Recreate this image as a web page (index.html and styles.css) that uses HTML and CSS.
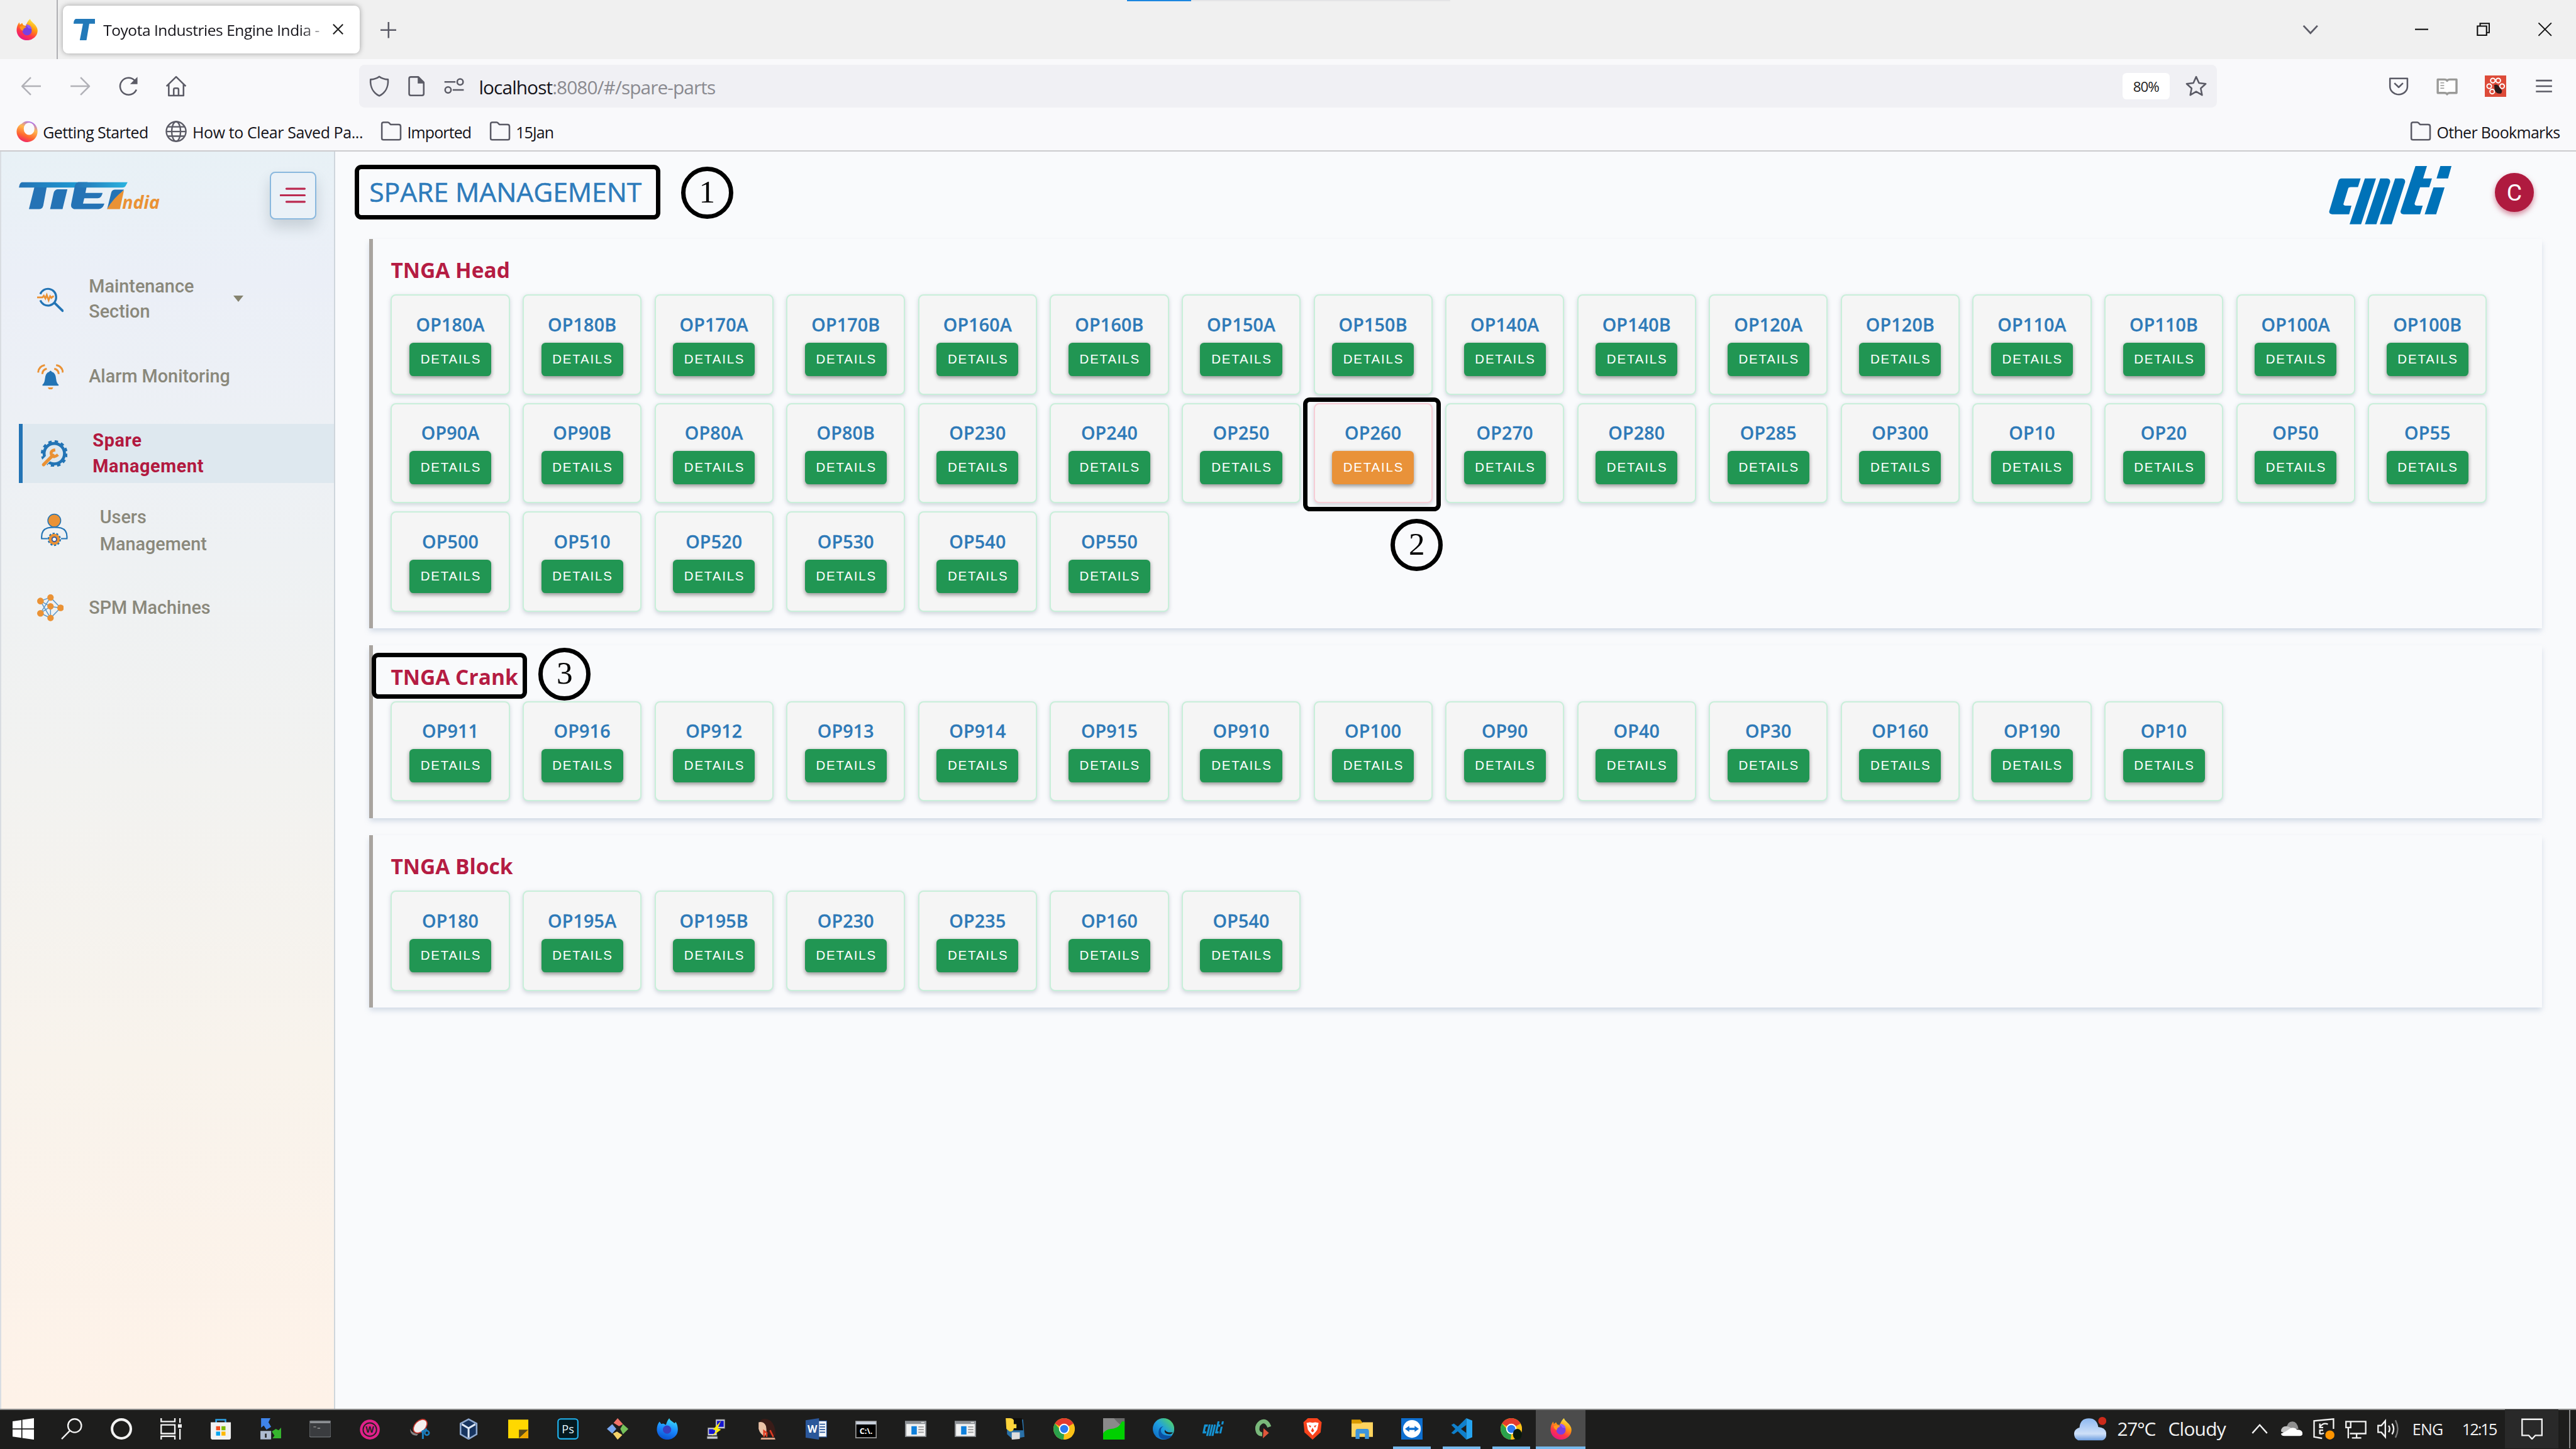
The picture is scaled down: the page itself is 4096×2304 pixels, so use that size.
FILE: index.html
```html
<!DOCTYPE html>
<html lang="en">
<head>
<meta charset="utf-8">
<title>Toyota Industries Engine India</title>
<link rel="stylesheet" href="styles.css">
</head>
<body>
<svg class="defs" aria-hidden="true">
  <linearGradient id="flame" x1="0.8" y1="0" x2="0.3" y2="1"><stop offset="0" stop-color="#fff44f"/><stop offset=".4" stop-color="#ff980e"/><stop offset=".7" stop-color="#ff3647"/><stop offset="1" stop-color="#e31587"/></linearGradient>
  <linearGradient id="aqua" x1="0.7" y1="0" x2="0.4" y2="1"><stop offset="0" stop-color="#3fe1f5"/><stop offset=".5" stop-color="#1a8cff"/><stop offset="1" stop-color="#0a4fd0"/></linearGradient>
  <linearGradient id="ring" x1="0.7" y1="0" x2="0.3" y2="1"><stop offset="0" stop-color="#a56bff"/><stop offset=".35" stop-color="#ffb84f"/><stop offset=".7" stop-color="#ff6a2f"/><stop offset="1" stop-color="#f0206a"/></linearGradient>
  <linearGradient id="bar" x1="0" x2="1"><stop offset="0" stop-color="#2573b5"/><stop offset="1" stop-color="#1c9fd6"/></linearGradient>
  <linearGradient id="bar2" x1="0" x2="1"><stop offset="0" stop-color="#2573b5"/><stop offset="1" stop-color="#2ab3df"/></linearGradient>
  <linearGradient id="cloud" x1="0" y1="0" x2="0" y2="1"><stop offset="0" stop-color="#8db8f0"/><stop offset=".7" stop-color="#cfe0f8"/><stop offset="1" stop-color="#6f9fe0"/></linearGradient>
  <linearGradient id="edge" x1="0" y1="1" x2="1" y2="0"><stop offset="0" stop-color="#0b64c0"/><stop offset=".5" stop-color="#1f9fe0"/><stop offset="1" stop-color="#5fe04a"/></linearGradient>
  <symbol id="firefox" viewBox="0 0 16 16"><path fill="url(#flame)" d="M10.3 0c.3 1.6 2 2.6 3 3.8 1.700 1.800 2.700 3.500 2.500 5.400A7.900 7 0 0 1 8 16 7.700 7.500 0 0 1 .2 8.600C.2 6 1 4 2.200 2.600l.5 1.700 1.600-1.200.9 1.600 1.800.4C8 2.800 8.800 1.200 10.300 0z"/><circle cx="8" cy="8.800" r="3.500" fill="#7a3fe0"/><path fill="#ff9a1e" d="M2.500 6c1.500-1 3-1 5 .4-1.500.2-2.500.9-2.600 2.500C3.500 8.500 2.800 7.500 2.500 6z"/><path fill="#9059ff" d="M7 4.300c2-.3 4 .8 4.500 3.200L9 7z"/></symbol>
  <symbol id="folder" viewBox="0 0 16 16"><path fill="none" stroke="#5b5b66" stroke-width="1.200" stroke-linejoin="round" d="M1 13V2.500q0-1.300 1.300-1.300h3.200q.6 0 1 .5l1 1.100h6q1.500 0 1.500 1.400V13q0 1.200-1.200 1.200H2.200Q1 14.200 1 13z"/></symbol>
  <symbol id="chrome" viewBox="0 0 16 16"><circle cx="8" cy="8" r="8" fill="#fbc116"/><path fill="#e33b2e" d="M8 8 1.100 4A8 8 0 0 1 14.900 4z"/><path fill="#2ba24c" d="M1.100 4 8 12 7.500 16A8 8 0 0 1 1.100 4z"/><circle cx="8" cy="8" r="3.900" fill="#fff"/><circle cx="8" cy="8" r="3" fill="#2a7af0"/></symbol>
  <symbol id="appwin" viewBox="0 0 16 16"><path fill="#8c9094" d="M0 2h16v12H0z"/><path fill="#f2f2f2" d="M1 4.300h14v9H1z"/><path fill="#0f80dc" d="M4.800 6h4v6.200h-4z"/><path stroke="#999" stroke-width=".8" d="M10 6.500h4M10 8.500h4M10 10.500h4"/><path stroke="#ddd" stroke-width=".7" d="M12 3.200h2.500"/></symbol>
  <symbol id="cmti" viewBox="923 948 321 333" preserveAspectRatio="none"><path d="M956 1019H1006L999 1068H980Q975 1069 974 1073L961 1165Q961 1173 967 1174H982L976 1223H932Q923 1222 924 1206L948 1032Q950 1020 956 1019ZM1017 1019H1046L1007 1281H977ZM1057 1019H1075Q1084 1022 1083 1040L1047 1281H1017ZM1096 1019H1114Q1123 1022 1122 1040L1087 1281H1056ZM1149 948H1179L1169 1019H1192L1185 1069H1161L1147 1160Q1146 1173 1153 1174H1168L1161 1223H1118Q1110 1222 1110 1206ZM1214 948H1243L1234 1019H1204ZM1196 1070H1225L1203 1223H1173Z"/></symbol>
</svg>

<header class="browser">
  <div class="tabs">
    <div class="pinned"><svg class="i16"><use href="#firefox"/></svg></div>
    <div class="tab">
      <svg class="i16" viewBox="0 0 16 16"><path fill="#2279b9" d="M1.500 0H16v3.600h-4.300L9.600 16H4.600L7 3.600H0Q0 1 1.500 0z"/></svg>
      <span class="tab-title">Toyota Industries Engine India -</span>
      <svg class="close" viewBox="0 0 8 8"><path d="M.4.4l7.200 7.200M7.600.4.4 7.600"/></svg>
    </div>
    <svg class="plus" viewBox="0 0 12 12"><path d="M6 0v12M0 6h12"/></svg>
    <div class="win">
      <svg class="chev" viewBox="0 0 12 12"><path d="M.8 3.200 6 8.800l5.200-5.600"/></svg>
      <span><svg viewBox="0 0 10 10"><path d="M0 5h10"/></svg></span>
      <span><svg viewBox="0 0 10 10"><path d="M.6 2.600h6.800v6.800H.6zM2.600 2.600V.6h6.800v6.800H7.400"/></svg></span>
      <span><svg viewBox="0 0 10 10"><path stroke-width=".9" d="M.2.200l9.600 9.600M9.800.2.200 9.800"/></svg></span>
    </div>
  </div>
  <div class="nav">
    <span class="nb dim"><svg viewBox="0 0 16 16"><path d="M15 8H1.200M7.500 1.500 1 8l6.500 6.500"/></svg></span>
    <span class="nb dim"><svg viewBox="0 0 16 16"><path d="M1 8h13.800M8.500 1.500 15 8l-6.500 6.500"/></svg></span>
    <span class="nb"><svg viewBox="0 0 16 16"><path d="M14 10.500A6.300 6.300 0 1 1 12.800 3.800"/><path class="fill" d="M14.800 1v5.500H9.300z"/></svg></span>
    <span class="nb"><svg viewBox="0 0 16 16"><path d="M.8 8 8 1l7.200 7M2.500 6.600V15h11V6.600M6.200 15v-4.500a1 1 0 0 1 1-1h1.600a1 1 0 0 1 1 1V15"/></svg></span>
    <div class="url">
      <span class="ub"><svg viewBox="0 0 16 16"><path d="M8 .8C9.500 2 12 2.800 14.500 3c.4 5.500-2 10-6.500 12.200C3.500 13 1.100 8.500 1.500 3 4 2.800 6.500 2 8 .8z"/></svg></span>
      <span class="ub"><svg viewBox="0 0 16 16"><path d="M2.600 13.600V2.400q0-1.300 1.300-1.300H9.500l4 4v8.500q0 1.300-1.300 1.300H3.900q-1.300 0-1.300-1.300z"/><path class="fill" d="M9 1v5h4.800z"/></svg></span>
      <span class="ub"><svg viewBox="0 0 16 16"><path d="M.8 4.800H9M15.200 10.800H7"/><circle cx="12.500" cy="4.800" r="2.200"/><circle cx="3.500" cy="10.800" r="2.200"/></svg></span>
      <span class="addr"><b>localhost</b>:8080/#/spare-parts</span>
      <span class="zoom">80%</span>
      <span class="ub"><svg viewBox="0 0 16 16"><path d="M8 1l2.100 4.600 5 .6-3.700 3.400 1 5L8 12l-4.400 2.600 1-5L.9 6.200l5-.6z"/></svg></span>
    </div>
    <div class="tools">
      <span class="nb"><svg viewBox="0 0 16 16"><path d="M1.500 2.200h13v6a6.500 6 0 0 1-13 0zM4.800 5.700 8 8.800l3.200-3.100"/></svg></span>
      <span class="nb reader"><svg viewBox="0 0 16 16"><path fill="#fff" d="M1 3h5q1.500 0 2 1 .5-1 2-1h5v10h-5q-1.500 0-2 1-.5-1-2-1H1z"/><path stroke-width=".8" d="M3 5.500h2.800M3 7.500h2.800M3 9.500h2.800"/></svg></span>
      <span class="nb"><svg viewBox="0 0 16 16"><path fill="#dd4b39" stroke="none" d="M0 0h16v16H0z"/><g fill="none" stroke="#fff" stroke-width=".9"><circle cx="6" cy="3.800" r="1.700"/><circle cx="10" cy="3.800" r="1.700"/><circle cx="3.300" cy="8" r="1.700"/><circle cx="12.900" cy="8" r="1.700"/><circle cx="5.500" cy="12" r="1.700"/></g><path fill="#2a1a1a" stroke="none" d="M7 7q2.500-.8 3.500 1.200l2.300 3q0 2.600-1.800 2.300-2.500 0-3.600-2.500z"/></svg></span>
      <span class="nb"><svg viewBox="0 0 16 16"><path d="M2 3.800h12M2 8h12M2 12h12"/></svg></span>
    </div>
  </div>
  <div class="bookmarks">
    <svg class="i16" viewBox="0 0 16 16"><path fill="url(#ring)" d="M8 .3c5 0 7.800 3.500 7.800 7.700A7.800 7.800 0 0 1 .2 8.200C.2 5 2 3 4 2.200 5.300 1 6.500.3 8 .3z"/><ellipse cx="9.500" cy="6" rx="4" ry="4.600" fill="#fafafc"/></svg><span class="bk-start">Getting Started</span>
    <svg class="i16 line" viewBox="0 0 16 16"><circle cx="8" cy="8" r="7.300"/><ellipse cx="8" cy="8" rx="3.300" ry="7.300"/><path d="M.7 8h14.600M1.800 4.500h12.400M1.800 11.500h12.400"/></svg><span class="bk-clear">How to Clear Saved Pa...</span>
    <svg class="i16"><use href="#folder"/></svg><span class="bk-imp">Imported</span>
    <svg class="i16"><use href="#folder"/></svg><span class="bk-jan">15Jan</span>
    <svg class="i16 push"><use href="#folder"/></svg><span class="bk-other">Other Bookmarks</span>
  </div>
</header>
<div class="loader"></div>

<div class="app">
  <aside class="side">
    <div class="brand">
      <svg class="tiei" viewBox="40 72 990 196"><path fill="url(#bar)" d="M60 75H520L505 113H40L45 92Q50 77 60 75Z"/><path fill="#2573b5" d="M148 112H234L210 240Q204 263 180 263H110ZM310 125H379L345 263H258L283 150Q290 127 310 125ZM455 75H520L505 150H625Q618 187 590 187H497L488 225H638Q625 263 598 263H425Q402 255 405 230L430 105Q436 78 455 75ZM710 127H775L657 263L685 150Q690 128 710 127Z"/><path fill="url(#bar2)" d="M455 75H800L785 103Q778 113 765 113H430Q436 78 455 75Z"/><path fill="#ea9235" d="M775 130L746 263H656Q700 185 775 130Z"/><text x="762" y="263" textLength="262" lengthAdjust="spacingAndGlyphs">ndia</text></svg>
      <button class="menu-btn"><svg viewBox="0 0 20 12"><path d="M5 1h14M0.500 6H19M5 11h14"/></svg></button>
    </div>
    <nav class="menu">
      <a class="item"><svg class="i20" viewBox="0 0 20 20"><path fill="none" stroke="#2374b5" stroke-width="1.500" d="M2.400 6.400A6.100 6.100 0 0 1 14.200 8.500 6.100 6.100 0 0 1 2.400 11"/><path stroke="#2374b5" stroke-width="1.800" stroke-linecap="round" d="M13 13l6 5.800"/><path fill="none" stroke="#ea9235" stroke-width="1.300" d="M0 8.800h4l1-1.200 1.200 2 1-2.600 1.400 4L9.700 8l1 1.200 1-1h.8"/></svg><span>Maintenance<br>Section</span><i class="caret"></i></a>
      <a class="item"><svg class="i20" viewBox="0 0 20 20"><path fill="#2374b5" d="M4 16.200q1.500-1 1.800-4Q6.100 7.500 9 6.700 10 5 11 6.700q2.900.8 3.200 5.500.3 3 1.800 4v.8H4z"/><path fill="#ea9235" d="M8 18.300h4q-.5 1.700-2 1.700t-2-1.700z"/><path fill="none" stroke="#ea9235" stroke-width="1.400" d="M.8 7.200Q1 2.500 5.800 1.600M3.900 8.300Q4 5 7.200 4.300M19.200 7.200Q19 2.500 14.200 1.600M16.100 8.300Q16 5 12.800 4.300"/></svg><span>Alarm Monitoring</span></a>
      <a class="item active"><svg class="i20" viewBox="0 0 20 20"><circle cx="10" cy="10" r="9" fill="none" stroke="#2374b5" stroke-width="2" stroke-dasharray="2.500 2.212"/><circle cx="10" cy="10" r="7.600" fill="none" stroke="#2374b5" stroke-width="2.200" /><path stroke="#dee8ef" stroke-width="5" d="M1 18l8-8"/><path stroke="#ea9235" stroke-width="2.400" stroke-linecap="round" d="M2 18.200l7-7"/><path fill="none" stroke="#ea9235" stroke-width="2.200" d="M10.700 7.200Q6.500 7.800 8 11.200 9.500 13.500 12.800 10.800"/></svg><span>Spare<br>Management</span></a>
      <a class="item users"><svg class="i-user" viewBox="0 0 20 26"><circle cx="10" cy="5.500" r="4.800" fill="#ea9235" stroke="#2374b5" stroke-width=".7"/><path fill="none" stroke="#2374b5" stroke-width="1" d="M5 19H.6Q0 12.500 5 11q5-1 10 0 5 1.500 4.400 8H15"/><circle cx="10" cy="19.500" r="4.300" fill="#ea9235" stroke="#2374b5" stroke-width="1.400" stroke-dasharray="1.500 1.200"/><circle cx="10" cy="19.500" r="4" fill="#ea9235"/><circle cx="10" cy="19.500" r="1.700" fill="#fff" stroke="#3a5c9e" stroke-width=".9"/></svg><span>Users<br>Management</span></a>
      <a class="item"><svg class="i20" viewBox="0 0 20 20"><path fill="none" stroke="#5b97c9" stroke-width=".7" d="M2.500 5 10 2.300l7.500 7.800-7.500 7.600L2.500 14 10 2.300M2.500 5 10 17.700M2.500 5 10 9.100 2.500 14M10 9.100l7.500 1M10 9.100v8.600"/><g fill="#ea9235"><circle cx="2.500" cy="5" r="2.500"/><circle cx="10" cy="2.400" r="2.400"/><circle cx="10" cy="9" r="2.400"/><circle cx="17.500" cy="10.100" r="2.500"/><circle cx="2.500" cy="14.200" r="2.500"/><circle cx="10" cy="17.600" r="2.400"/></g></svg><span>SPM Machines</span></a>
    </nav>
  </aside>

  <main class="page">
    <div class="top">
      <h1>SPARE MANAGEMENT</h1>
      <svg class="cmti"><use href="#cmti"/></svg>
      <div class="avatar">C</div>
    </div>
    <section class="panel">
      <h2>TNGA Head</h2>
      <div class="grid">
        <div class="card"><h3>OP180A</h3><button>DETAILS</button></div>
        <div class="card"><h3>OP180B</h3><button>DETAILS</button></div>
        <div class="card"><h3>OP170A</h3><button>DETAILS</button></div>
        <div class="card"><h3>OP170B</h3><button>DETAILS</button></div>
        <div class="card"><h3>OP160A</h3><button>DETAILS</button></div>
        <div class="card"><h3>OP160B</h3><button>DETAILS</button></div>
        <div class="card"><h3>OP150A</h3><button>DETAILS</button></div>
        <div class="card"><h3>OP150B</h3><button>DETAILS</button></div>
        <div class="card"><h3>OP140A</h3><button>DETAILS</button></div>
        <div class="card"><h3>OP140B</h3><button>DETAILS</button></div>
        <div class="card"><h3>OP120A</h3><button>DETAILS</button></div>
        <div class="card"><h3>OP120B</h3><button>DETAILS</button></div>
        <div class="card"><h3>OP110A</h3><button>DETAILS</button></div>
        <div class="card"><h3>OP110B</h3><button>DETAILS</button></div>
        <div class="card"><h3>OP100A</h3><button>DETAILS</button></div>
        <div class="card"><h3>OP100B</h3><button>DETAILS</button></div>
        <div class="card"><h3>OP90A</h3><button>DETAILS</button></div>
        <div class="card"><h3>OP90B</h3><button>DETAILS</button></div>
        <div class="card"><h3>OP80A</h3><button>DETAILS</button></div>
        <div class="card"><h3>OP80B</h3><button>DETAILS</button></div>
        <div class="card"><h3>OP230</h3><button>DETAILS</button></div>
        <div class="card"><h3>OP240</h3><button>DETAILS</button></div>
        <div class="card"><h3>OP250</h3><button>DETAILS</button></div>
        <div class="card warn"><h3>OP260</h3><button>DETAILS</button></div>
        <div class="card"><h3>OP270</h3><button>DETAILS</button></div>
        <div class="card"><h3>OP280</h3><button>DETAILS</button></div>
        <div class="card"><h3>OP285</h3><button>DETAILS</button></div>
        <div class="card"><h3>OP300</h3><button>DETAILS</button></div>
        <div class="card"><h3>OP10</h3><button>DETAILS</button></div>
        <div class="card"><h3>OP20</h3><button>DETAILS</button></div>
        <div class="card"><h3>OP50</h3><button>DETAILS</button></div>
        <div class="card"><h3>OP55</h3><button>DETAILS</button></div>
        <div class="card"><h3>OP500</h3><button>DETAILS</button></div>
        <div class="card"><h3>OP510</h3><button>DETAILS</button></div>
        <div class="card"><h3>OP520</h3><button>DETAILS</button></div>
        <div class="card"><h3>OP530</h3><button>DETAILS</button></div>
        <div class="card"><h3>OP540</h3><button>DETAILS</button></div>
        <div class="card"><h3>OP550</h3><button>DETAILS</button></div>
      </div>
    </section>
    <section class="panel">
      <h2>TNGA Crank</h2>
      <div class="grid">
        <div class="card"><h3>OP911</h3><button>DETAILS</button></div>
        <div class="card"><h3>OP916</h3><button>DETAILS</button></div>
        <div class="card"><h3>OP912</h3><button>DETAILS</button></div>
        <div class="card"><h3>OP913</h3><button>DETAILS</button></div>
        <div class="card"><h3>OP914</h3><button>DETAILS</button></div>
        <div class="card"><h3>OP915</h3><button>DETAILS</button></div>
        <div class="card"><h3>OP910</h3><button>DETAILS</button></div>
        <div class="card"><h3>OP100</h3><button>DETAILS</button></div>
        <div class="card"><h3>OP90</h3><button>DETAILS</button></div>
        <div class="card"><h3>OP40</h3><button>DETAILS</button></div>
        <div class="card"><h3>OP30</h3><button>DETAILS</button></div>
        <div class="card"><h3>OP160</h3><button>DETAILS</button></div>
        <div class="card"><h3>OP190</h3><button>DETAILS</button></div>
        <div class="card"><h3>OP10</h3><button>DETAILS</button></div>
      </div>
    </section>
    <section class="panel">
      <h2>TNGA Block</h2>
      <div class="grid">
        <div class="card"><h3>OP180</h3><button>DETAILS</button></div>
        <div class="card"><h3>OP195A</h3><button>DETAILS</button></div>
        <div class="card"><h3>OP195B</h3><button>DETAILS</button></div>
        <div class="card"><h3>OP230</h3><button>DETAILS</button></div>
        <div class="card"><h3>OP235</h3><button>DETAILS</button></div>
        <div class="card"><h3>OP160</h3><button>DETAILS</button></div>
        <div class="card"><h3>OP540</h3><button>DETAILS</button></div>
      </div>
    </section>
  </main>
</div>

<footer class="taskbar">
  <span class="t first"><svg viewBox="0 0 16 16" fill="#fff"><path d="M0 2.300 6.500 1.400v6.200H0zM7.300 1.200 16 0v7.600H7.300zM0 8.400h6.500v6.200L0 13.700zM7.300 8.400H16V16l-8.700-1.200z"/></svg></span>
  <span class="t"><svg class="w" viewBox="0 0 16 16"><circle cx="10.200" cy="5.600" r="5"/><path d="M6.600 9.300.5 15.500"/></svg></span>
  <span class="t"><svg class="w" viewBox="0 0 16 16"><circle cx="8" cy="8" r="7" stroke-width="1.900"/></svg></span>
  <span class="t"><svg class="w" viewBox="0 0 16 16"><path d="M.6 0v2.500h10.200V0M.6 5h10.200v6.500H.6zM.6 16v-2.500h10.200V16M14.600 0v3.500M14.600 8v8"/><path stroke-width="3" d="M14.600 4.500v2.600"/></svg></span>
  <span class="t"><svg viewBox="0 0 16 16"><path fill="none" stroke="#2ea3e6" stroke-width="1.200" d="M4.500 4V1.200h7V4"/><path fill="#f2f2f2" d="M.5 3h15v11.500Q15.500 16 14 16H2Q.5 16 .5 14.500z"/><path fill="#f25022" d="M4.500 6h3v3h-3z"/><path fill="#7fba00" d="M8.500 6h3v3h-3z"/><path fill="#00a4ef" d="M4.500 10h3v3h-3z"/><path fill="#ffb900" d="M8.500 10h3v3h-3z"/></svg></span>
  <span class="t"><svg viewBox="0 0 16 16"><path fill="#3f84ea" d="M1 0h7L6.500 3 8.500 6.500 5 8.500 3 5.500 1 7z"/><path fill="#36b52e" d="M16 7v8H9.500l1.500-2-2-3 3-2 2 1z"/><path fill="#aebbd0" d="M.5 9.500h8v6.300h-8z"/><path stroke="#222" stroke-width="1.200" d="M4.500 11.500v3"/></svg></span>
  <span class="t"><svg viewBox="0 0 16 16"><rect y="2" width="16" height="12" rx="1" fill="#3a3c3f" stroke="#707478" stroke-width=".6"/><path fill="#8c8f93" d="M.5 2.300h15v1.500H.5z"/><path stroke="#999" stroke-width=".6" d="M3 6.500h2M6 7.500h2"/></svg></span>
  <span class="t"><svg viewBox="0 0 16 16"><circle cx="8" cy="8.500" r="7.400" fill="#e0218a"/><circle cx="8" cy="8.500" r="5" fill="none" stroke="#222" stroke-width=".9"/><text x="8" y="11" fill="#222" font-size="6.500" font-weight="700" text-anchor="middle">W</text></svg></span>
  <span class="t"><svg viewBox="0 0 16 16"><ellipse cx="8.500" cy="6" rx="4" ry="6" transform="rotate(45 8.500 6)" fill="#f4f0f0" stroke="#c8382f" stroke-width=".8"/><path fill="#8a8484" d="M1 8q1 3 6 4l-1 1Q1 13 1 8z"/><path fill="none" stroke="#1b7fc0" stroke-width="1.400" d="M9.500 10.500l4-2.500M10.500 9v6.500"/><circle cx="13.500" cy="11" r="1.600" fill="none" stroke="#1b7fc0" stroke-width="1.200"/></svg></span>
  <span class="t"><svg viewBox="0 0 16 16"><path fill="#17345f" stroke="#8fa9d0" stroke-width="1.200" d="M8 .8 14 4v8l-6 3.500L2 12V4z"/><path fill="none" stroke="#dfe8f5" stroke-width="1.400" d="M3 4.500 8 7.500l5-3M8 7.500v7"/></svg></span>
  <span class="t"><svg viewBox="0 0 16 16"><path fill="#ffd800" d="M.5 1h15v14H.5z"/><path fill="#5b4a1a" d="M8.500 8.500h7L8.500 15z"/><path fill="#f0a800" d="M15.500 8.500V15h-7z"/></svg></span>
  <span class="t"><svg viewBox="0 0 16 16"><rect x=".6" y=".6" width="14.800" height="14.800" rx="2" fill="#04191f" stroke="#20b4f0" stroke-width="1"/><text x="8" y="11.200" fill="#e6f6ff" font-size="8.500" text-anchor="middle">Ps</text></svg></span>
  <span class="t"><svg viewBox="0 0 16 16"><path fill="#f0736a" d="M8 0l4 4.500-3 1.500-4-2.500z"/><path fill="#76c05a" d="M12 4.500 16 8l-4 4-2-4z"/><path fill="#f3d26a" d="M11.500 12.500 8 16l-3.500-4.500 3-1.500z"/><path fill="#78a8f0" d="M4 4.500 0 8l4 3.500 3-3.500z"/></svg></span>
  <span class="t"><svg viewBox="0 0 16 16"><path fill="url(#aqua)" d="M9.500 0c.3 1.600 2.500 2.600 4 3.800l.8-1c1.300 1.800 1.700 4.500 1.500 6.400A7.900 7 0 0 1 8 16 7.700 7.500 0 0 1 .2 8.600C.2 6 1 4 2.200 2.600l1.300 1.700L5 4l2 1C7.500 2.800 8.500 1.200 9.500 0z"/><circle cx="7.800" cy="8.500" r="3.100" fill="#3a3fc0"/></svg></span>
  <span class="t"><svg viewBox="0 0 16 16"><path fill="#c9ccd2" stroke="#333" stroke-width=".4" d="M7 .8h7v7H7zM1 7h7v6H1zM.5 13.500h8v2h-8z"/><path fill="#1414d0" d="M8 2h5v4.500H8zM2 8.200h4.500v3.500H2z"/><path fill="#fff000" d="M11 2 5 8.500l3 .5-4 4.500L11 8.500 8.500 7.500z"/></svg></span>
  <span class="t"><svg viewBox="0 0 16 16"><path fill="#3a1c18" d="M3 2q3-3 8 0 4 4 3.500 11L8 12z"/><path fill="#ecc3a8" d="M2 3q4-1 5.500 3 1 5-1 7.500Q3 12 2 8z"/><path fill="#d8a488" d="M4 14.500h10l.5 1.500H3.500z"/><path stroke="#e03a20" stroke-width="1.200" fill="none" d="M6 14V9.500l2 1.500v3M10.500 9l2.500 5"/></svg></span>
  <span class="t"><svg viewBox="0 0 16 16"><path fill="#f5f8fc" stroke="#2b579a" stroke-width=".6" d="M9 2h6.700v12H9z"/><path stroke="#2b579a" stroke-width=".9" d="M10.500 4.500h4M10.500 6.500h4M10.500 8.500h4M10.500 10.500h4"/><path fill="#2b579a" d="M0 1.500 10 0v16L0 14.500z"/><text x="5" y="11" fill="#fff" font-size="7.500" font-weight="700" text-anchor="middle">W</text></svg></span>
  <span class="t"><svg viewBox="0 0 16 16"><path fill="#000" stroke="#9a9a9a" stroke-width=".8" d="M.4 2.400h15.200v12.200H.4z"/><path fill="#c8d0dc" d="M.6 2.500h14.800v2.200H.6z"/><text x="8" y="11.800" fill="#fff" font-size="6" font-weight="700" text-anchor="middle">C:\.</text></svg></span>
  <span class="t"><svg><use href="#appwin"/></svg></span>
  <span class="t"><svg><use href="#appwin"/></svg></span>
  <span class="t"><svg viewBox="0 0 16 16"><path fill="#2a71a8" d="M2 0l12 1 1 13-9 1.500L2 12z"/><path fill="#0d0d0d" d="M6 0h7l1 9H6z"/><path fill="#ffd43b" d="M1 0q5-.5 6 1.500v3h2v3H7Q7 10 4 10L1.500 8z"/><path fill="#ddd" d="M5.500 10.500h6v5l-6 .5z"/></svg></span>
  <span class="t"><svg><use href="#chrome"/></svg></span>
  <span class="t"><svg viewBox="0 0 16 16"><path fill="#8a8a8a" d="M0 0h16v16H0z"/><path fill="#6b6b6b" d="M8 0h8v6q-3 0-8-6z"/><path fill="#00d000" d="M0 16v-4.500q1.500-3 6-3.500 6-.5 8-5.500h2V16z"/></svg></span>
  <span class="t"><svg viewBox="0 0 16 16"><circle cx="8" cy="8" r="8" fill="url(#edge)"/><path fill="#0a4fa0" d="M6 9q0 4.500 8.500 4-3 3.500-7 2.500T4.500 9q.5-2.500 3.500-3-2 1-2 3z"/><path fill="#1c1c1c" d="M9 8.500q1 2.500 6 2-1 1.500-3 1.500-4-.5-3-3.500z"/></svg></span>
  <span class="t"><svg class="mini"><use href="#cmti"/></svg></span>
  <span class="t"><svg viewBox="0 0 16 16"><path fill="none" stroke="#79b87a" stroke-width="3" d="M12.800 6.500Q10.500.8 6.500 3 2.500 6 4.500 10.500q1 1.500 3 1.500"/><path fill="#e0553a" d="M8.500 7.500 12.500 11l-4.500 4z"/></svg></span>
  <span class="t"><svg viewBox="0 0 16 16"><path fill="#f8431c" d="M4.500 0h7l3.300 3-.8 7.500-6 5.500-6-5.500L1.200 3z"/><path fill="#fff" d="M3.500 3.500 6 3l2 .4L10 3l2.500.5-1 5L10.500 10 8 12.800 5.500 10 4.500 8.500z"/><path fill="#f8431c" d="M5 5.200l2 .5-.8 1.400zM11 5.200l-2 .5.800 1.400zM8 7l1.200 2.500L8 10.500l-1.200-1z"/></svg></span>
  <span class="t"><svg viewBox="0 0 16 16"><path fill="#d99a00" d="M0 1h6.500l1.500 2v3H0z"/><path fill="#ffd45e" d="M0 4h7l1.500-1H16v11H0z"/><path fill="#3d95dc" d="M3 15.500V9.800Q3 8 4.500 8h7Q13 8 13 9.800v5.700h-3V11.500H6v4z"/></svg></span>
  <span class="t run"><svg viewBox="0 0 16 16"><path fill="#0e6fd0" d="M0 0h16v16H0z"/><circle cx="8" cy="8" r="6.600" fill="#fff"/><path fill="#0e6fd0" d="M2.800 8 6 5.800v1.400h4V5.800L13.200 8 10 10.200V8.800H6v1.400z"/></svg></span>
  <span class="t run"><svg viewBox="0 0 16 16"><path fill="#0f80cc" d="M11.500 0v5L2.200 12 .3 11z"/><path fill="#0f80cc" d="M.3 5 2.200 4l9.300 7v5z"/><path fill="#26a4f0" d="M11.500 0 16 1.800v12.400L11.500 16z"/></svg></span>
  <span class="t run"><svg viewBox="0 0 16 16"><use href="#chrome"/><ellipse cx="12.500" cy="12" rx="3.300" ry="4" fill="#0a1a0c"/></svg></span>
  <span class="t run on"><svg><use href="#firefox"/></svg></span>
  <div class="tray">
    <svg class="weather" viewBox="0 0 24 18"><path fill="url(#cloud)" d="M3 17.500Q0 16 0 12.500 0 9 4 8 4.500 1 11 1q6 0 7 6.500 6 .5 6 5.500 0 3.500-3 4.500z"/><circle cx="21" cy="3" r="3" fill="#cc2a1a"/></svg>
    <span class="temp">27°C</span><span class="sky">Cloudy</span>
    <svg class="w c1" viewBox="0 0 16 16"><path d="M2.500 11.200 8 5l5.500 6.200"/></svg>
    <svg class="c2" viewBox="0 0 16 16"><path fill="#8f8f8f" d="M4 8Q4.500 2.500 8.500 2.500 12 2.500 13 8z"/><path fill="#c4c4c4" d="M0 10q0-4 4-4 4 .5 6 4l-3 3z"/><path fill="#fff" d="M2.500 13.200Q0 13.200 0 11.500q3-1 7-4 3-1 5 1 4 0 4 3 0 1.700-2 1.700z"/></svg>
    <svg class="w c3" viewBox="0 0 16 16"><path d="M15.200 8V.6L.7 2v12l6 1M11 4.500Q7.500 3 5 6.500M5 4v3h2.500M5 11.500q2 .5 3-.5M5 12v-3h2.500"/><circle cx="12.500" cy="12.500" r="3.400" fill="#ff9500" stroke="none"/></svg>
    <svg class="w c4" viewBox="0 0 16 16"><path d="M4 2.500h11.300v9H3.500M8.500 11.500v3M5 14.700h7M.6 2.500h3.500V7H.6zM2.300 7v8"/></svg>
    <svg class="w c5" viewBox="0 0 16 16"><path d="M.6 5.500H3l3-3.500v12L3 10.500H.6zM8.500 5.500q1.500 2.500 0 5M11 4q2.500 4 0 8"/><path stroke="#777" d="M13.500 1.500q3.500 6.500 0 13"/></svg>
    <span class="lang">ENG</span><span class="time">12:15</span>
    <span class="note"><svg class="w" viewBox="0 0 16 16"><path d="M.6.800h14.800v12H10.500L8 15.500l-2.500-2.700H.6z"/></svg></span>
  </div>
</footer>

<div class="mark m1"></div><div class="num n1">1</div>
<div class="mark m2"></div><div class="num n2">2</div>
<div class="mark m3"></div><div class="num n3">3</div>
</body>
</html>
```
FILE: styles.css
```css
/* 1rem = 10 layout pixels of a 1920x1080 desktop */
html { font-size: 21.3333px; }
* { box-sizing: border-box; }
body { margin: 0; width: 192rem; height: 108rem; display: flex; flex-direction: column; overflow: hidden; position: relative; background: #f9fafc; font-family: "Open Sans", sans-serif; font-size: 1.2rem; }
h1, h2, h3 { margin: 0; }
svg { display: block; flex: none; }
.defs { position: absolute; width: 0; height: 0; }
.i16 { width: 1.6rem; height: 1.6rem; }
.i20 { width: 2rem; height: 2rem; }

/* browser chrome */
.browser { height: 11.3rem; background: #f9f9fb; border-bottom: .1rem solid #cbcbce; }
.tabs { height: 4.4rem; background: #f0f0f0; display: flex; align-items: center; }
.pinned { width: 4.3rem; height: 100%; padding-left: 1.2rem; display: flex; align-items: center; border-right: .1rem solid #b0b0b4; }
.tab { margin-left: .4rem; width: 22.1rem; height: 3.6rem; padding-left: .8rem; background: #fff; border-radius: .4rem; box-shadow: 0 0 .4rem rgba(0,0,0,.35); display: flex; align-items: center; }
.tab-title { margin-left: .6rem; padding-top: .1rem; width: 17.1rem; font-size: 1.15rem; letter-spacing: -.022rem; line-height: 1.6rem; color: #15141a; white-space: nowrap; overflow: hidden; -webkit-mask-image: linear-gradient(90deg, #000 14.6rem, rgba(0,0,0,.35) 16.2rem); mask-image: linear-gradient(90deg, #000 14.6rem, rgba(0,0,0,.35) 16.2rem); }
.close { width: .8rem; height: .8rem; stroke: #222; stroke-width: 1; fill: none; }
.plus { width: 1.2rem; height: 1.2rem; margin: .1rem 0 0 1.55rem; stroke: #5b5b66; stroke-width: 1.2; }
.win { margin-left: auto; display: flex; align-items: center; }
.win svg { fill: none; stroke: #111; stroke-width: 1; width: 1rem; height: 1rem; }
.win .chev { width: 1.2rem; height: 1.2rem; margin-right: 5.4rem; stroke: #5b5b66; stroke-width: 1.3; }
.win span { width: 4.6rem; display: flex; justify-content: center; }
.nav { height: 4rem; padding: .05rem .6rem 0 .55rem; display: flex; align-items: center; }
.nb, .ub { display: flex; justify-content: center; width: 3.6rem; }
.ub { width: 2.8rem; }
.nb svg, .ub svg { width: 1.6rem; height: 1.6rem; fill: none; stroke: #5b5b66; stroke-width: 1.2; stroke-linejoin: round; }
.nb .fill, .ub .fill { fill: #5b5b66; stroke: none; }
.reader svg { stroke: #9a9a98; stroke-width: 1.6; }
.dim { opacity: .45; }
.url { margin-left: 11.8rem; width: 138.5rem; height: 3.2rem; padding: 0 .15rem 0 .1rem; border-radius: .4rem; background: #f0f0f4; display: flex; align-items: center; }
.addr { margin-left: .45rem; padding-top: .1rem; font-size: 1.4rem; letter-spacing: -.044rem; color: #8a8a90; white-space: nowrap; }
.addr b { font-weight: 400; color: #15141a; }
.zoom { margin-left: auto; margin-right: .6rem; width: 3.5rem; height: 2rem; line-height: 2.1rem; text-align: center; border-radius: .3rem; background: #fff; font-size: 1.05rem; letter-spacing: -.05rem; color: #222; }
.tools { margin-left: auto; display: flex; }
.bookmarks { height: 2.8rem; padding: 0 1.2rem; display: flex; align-items: center; font-size: 1.17rem; color: #15141a; white-space: nowrap; line-height: 1.6rem; }
.line { fill: none; stroke: #5b5b66; stroke-width: 1.1; }
.bookmarks span { margin-left: .4rem; padding-top: .1rem; }
.bk-start { width: 9.15rem; letter-spacing: -.028rem; }
.bk-clear { width: 14rem; letter-spacing: -.018rem; }
.bk-imp { width: 6.1rem; letter-spacing: -.04rem; }
.bk-jan { letter-spacing: -.04rem; }
.push { margin-left: auto; }
.bk-other { letter-spacing: -.03rem; }
.loader { position: absolute; left: 84rem; top: 0; width: 24.1rem; height: .1rem; background: linear-gradient(90deg, #1c86e0 4.8rem, #e4e4e6 4.8rem); }

/* application */
.app { flex: 1; display: flex; min-height: 0; }
.side { width: 25rem; border-left: .1rem solid #d9dde2; border-right: .1rem solid #cfd6dc; background: linear-gradient(#e8f1f6, #ebeff7 10%, #eef1f3 32%, #f2f2f0 50%, #f8f3ec 72%, #fef2e8); }
.brand { padding: 1.5rem 0 0 1.3rem; display: flex; align-items: flex-start; }
.tiei { width: 10.56rem; height: 2.09rem; margin-top: .75rem; overflow: visible; }
.tiei text { font: italic 700 128px "Open Sans", sans-serif; fill: #ea9235; }
.menu-btn { margin-left: 8.14rem; width: 3.5rem; height: 3.55rem; padding: 0; display: flex; align-items: center; justify-content: center; border: .1rem solid #8ab8de; border-radius: .4rem; background: #eaf1f7; box-shadow: 0 .6rem 1rem rgba(60,80,90,.2); }
.menu-btn svg { width: 1.95rem; height: 1.17rem; fill: none; stroke: #bb2a50; stroke-width: 1.5; stroke-linecap: round; }
.menu { margin-top: 3.73rem; display: flex; flex-direction: column; gap: 1.36rem; }
.item { height: 4.4rem; padding-left: 2.65rem; display: flex; align-items: center; gap: 1.88rem; font: 500 1.35rem/1.9rem Roboto, sans-serif; letter-spacing: 0; color: #8a887b; }
.caret { margin-left: 1.05rem; border: .4rem solid transparent; border-top: .5rem solid #85836f; border-bottom: 0; }
.active { margin-left: 1.3rem; padding-left: 1.35rem; border-left: .3rem solid #2374b5; background: #dee8ef; color: #b2193f; font-weight: 700; letter-spacing: .03rem; }
.users { padding-left: 2.95rem; gap: 2.4rem; line-height: 2rem; }
.i-user { width: 2rem; height: 2.6rem; }
.page { flex: 1; padding: 0 2.55rem 0 2.5rem; }
.top { height: 6.5rem; display: flex; align-items: flex-start; }
h1 { margin: 1.6rem 0 0 .03rem; font-size: 2rem; font-weight: 500; line-height: 2.8rem; color: #2d7bbb; letter-spacing: -.003rem; -webkit-text-stroke: .025rem #2d7bbb; }
.cmti { margin: 1.08rem 3.2rem 0 auto; width: 9.17rem; height: 4.35rem; fill: #0072b8; }
.avatar { margin: 1.6rem .6rem 0 0; width: 2.9rem; height: 2.9rem; border-radius: 50%; background: #af1a3f; color: #fff; font: 400 1.75rem/2.95rem Roboto, sans-serif; text-align: center; box-shadow: 0 .2rem .4rem rgba(175,26,63,.5); }
.panel { margin-bottom: 1.26rem; padding: 1.25rem 0 1.25rem 1.35rem; border-left: .3rem solid #a9a49f; box-shadow: 0 .25rem .4rem -.05rem rgba(140,160,190,.38); }
h2 { margin-bottom: .7rem; font-size: 1.57rem; font-weight: 700; line-height: 2.2rem; color: #b51c43; }
.grid { display: grid; grid-template-columns: repeat(16, 8.87rem); grid-auto-rows: 7.48rem; gap: .6rem .955rem; }
.card { display: flex; flex-direction: column; align-items: center; padding-top: 1.25rem; background: #f5f5f5; border: .1rem solid #c9efda; border-radius: .4rem; box-shadow: 0 .1rem .3rem rgba(90,110,130,.25); }
.warn { border-color: #f7cdd6; }
h3 { font-size: 1.34rem; font-weight: 600; letter-spacing: .01rem; line-height: 1.8rem; color: #2e7ab8; -webkit-text-stroke: .012rem #2e7ab8; }
.card button { margin-top: .45rem; width: 6.1rem; height: 2.48rem; padding: 0 0 0 .08rem; border: 0; border-radius: .3rem; background: #219653; color: #fff; font: 400 .96rem/2.48rem "Liberation Sans", Arial, sans-serif; letter-spacing: .085rem; box-shadow: 0 .1rem .3rem rgba(0,0,0,.4); }
.warn button { background: #e99239; }

/* taskbar */
.taskbar { height: 3rem; flex: none; display: flex; background: #1d1d1c; border-top: .1rem solid #8f8f8f; }
.t { position: relative; width: 3.7rem; padding-bottom: .1rem; display: flex; align-items: center; justify-content: center; }
.t svg { width: 1.6rem; height: 1.6rem; }
.t text { font-family: "Open Sans", sans-serif; }
.first { width: 3.5rem; }
.w { fill: none; stroke: #f2f2f2; stroke-width: 1.1; }
.t .mini { height: 1.1rem; fill: #1592d2; }
.run::after { content: ""; position: absolute; left: .45rem; right: .45rem; bottom: 0; height: .2rem; background: #76b9ed; }
.on { background: #4c4c4c; }
.on::after { left: 0; right: 0; }
.tray { margin-left: auto; padding-bottom: .1rem; display: flex; align-items: center; color: #f2f2f2; white-space: nowrap; }
.tray > svg { width: 1.6rem; height: 1.6rem; }
.tray .weather { width: 2.4rem; height: 1.8rem; margin-right: .8rem; }
.temp { width: 3.8rem; font-size: 1.4rem; letter-spacing: -.06rem; }
.sky { width: 6rem; font-size: 1.4rem; letter-spacing: -.035rem; }
.tray .c2, .tray .c3, .tray .c4, .tray .c5 { margin-left: .8rem; }
.lang { margin-left: 1rem; width: 3.7rem; font-size: 1.17rem; letter-spacing: -.03rem; }
.time { width: 3.2rem; font-size: 1.2rem; letter-spacing: -.1rem; }
.note { width: 4.9rem; height: 2.9rem; margin-right: .4rem; border-right: .1rem solid #8a8a8a; background: linear-gradient(90deg, #292929 4rem, transparent 4rem); display: flex; align-items: center; padding-left: 1.2rem; }
.note svg { width: 1.6rem; height: 1.6rem; }

/* numbered callouts drawn over the page */
.mark { position: absolute; border: .37rem solid #000; border-radius: .5rem; }
.m1 { left: 26.43rem; top: 12.3rem; width: 22.77rem; height: 4.08rem; }
.m2 { left: 97.13rem; top: 29.64rem; width: 10.27rem; height: 8.49rem; }
.m3 { left: 27.7rem; top: 48.65rem; width: 11.6rem; height: 3.41rem; border-width: .34rem; }
.num { position: absolute; width: 3.9rem; height: 3.9rem; border: .37rem solid #000; border-radius: 50%; text-align: center; font: 2.4rem/3.1rem "Liberation Serif", serif; color: #000; }
.n1 { left: 50.75rem; top: 12.4rem; }
.n2 { left: 103.65rem; top: 38.65rem; }
.n3 { left: 40.13rem; top: 48.3rem; }
```
